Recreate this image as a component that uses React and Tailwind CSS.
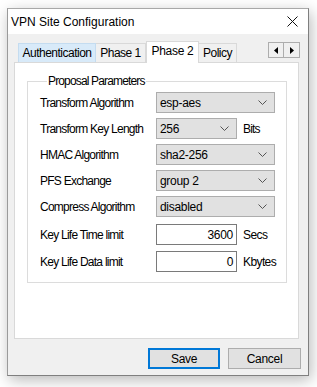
import React from "react";

const Chevron = () => (
  <svg width="9" height="5" viewBox="0 0 9 5">
    <path d="M0.5 0.5 L4.5 4.5 L8.5 0.5" fill="none" stroke="#555" strokeWidth="1" />
  </svg>
);

const Select = ({ value, width }) => (
  <div
    className={`flex items-center justify-between h-[21px] border border-[#adadad] bg-[#e1e1e1] pl-[3px] pr-[7px] ${width}`}
  >
    <span className="tracking-[-0.3px]">{value}</span>
    <Chevron />
  </div>
);

const NumInput = ({ value }) => (
  <div className="flex items-center justify-end h-[21px] w-[81px] border border-[#7a7a7a] bg-white pr-[3px] tracking-[-0.3px]">
    {value}
  </div>
);

const Row = ({ label, children, className = "" }) => (
  <div className={`flex items-center ${className}`}>
    <span className="w-[116px] tracking-[-0.75px]">{label}</span>
    {children}
  </div>
);

export default function App() {
  const tabBase = "flex items-center justify-center h-[19px] border border-b-0 tracking-[-0.5px]";

  return (
    <div className="w-[317px] h-[387px] bg-white pl-[7px] pt-[8px] text-[12px] text-black [font-family:'Liberation_Sans',Arial,sans-serif]">
      <div className="flex flex-col w-[302px] h-[368px] border border-[#7f7f7f] border-t-[#a8a8a8] border-l-[#9a9a9a] bg-[#f0f0f0] shadow-[2px_4px_14px_rgba(0,0,0,0.28)]">
        {/* title bar */}
        <div className="flex items-center justify-between h-[25px] bg-white pl-[3px] pr-[10px]">
          <span>VPN Site Configuration</span>
          <svg width="11" height="11" viewBox="0 0 11 11">
            <path d="M0.5 0.5 L10.5 10.5 M10.5 0.5 L0.5 10.5" stroke="#111" strokeWidth="1" />
          </svg>
        </div>

        {/* tabs */}
        <div className="ml-[6px] mt-[7px] w-[285px] flex items-end h-[21px]">
          <div className="w-[4px]" />
          <div className={`${tabBase} w-[78px] bg-[#d8eaf9] border-[#c4dcf0]`}>Authentication</div>
          <div className={`${tabBase} w-[50px] border-l-0 border-[#d9d9d9]`}>Phase 1</div>
          <div className="relative z-10 -mb-px flex items-center justify-center h-[22px] w-[53px] border border-b-0 border-[#d9d9d9] bg-white pb-[3px] tracking-[-0.3px]">
            Phase 2
          </div>
          <div className={`${tabBase} w-[38px] border-l-0 border-[#d9d9d9]`}>Policy</div>
          <div className="ml-auto -mr-px self-start mt-[1px] flex">
            <div className="flex items-center justify-center w-[16px] h-[16px] border border-[#adadad] bg-[#f0f0f0]">
              <svg width="4" height="7" viewBox="0 0 4 7">
                <path d="M4 0 L0 3.5 L4 7 Z" fill="#000" />
              </svg>
            </div>
            <div className="flex items-center justify-center w-[16px] h-[16px] border border-l-0 border-[#adadad] bg-[#f0f0f0]">
              <svg width="4" height="7" viewBox="0 0 4 7">
                <path d="M0 0 L4 3.5 L0 7 Z" fill="#000" />
              </svg>
            </div>
          </div>
        </div>

        {/* panel */}
        <div className="ml-[6px] w-[285px] h-[277px] border border-[#d9d9d9] bg-white pt-[11px]">
          <fieldset className="ml-[12px] w-[260px] border border-[#dcdcdc] pl-[12px] pt-[4px] pb-[10px]">
            <legend className="ml-[7px] px-[1px] leading-[14px] tracking-[-0.85px]">Proposal Parameters</legend>
            <div className="flex flex-col">
              <Row label="Transform Algorithm">
                <Select value="esp-aes" width="w-[119px]" />
              </Row>
              <Row label="Transform Key Length" className="mt-[5px]">
                <Select value="256" width="w-[81px]" />
                <span className="ml-[6px] tracking-[-0.8px]">Bits</span>
              </Row>
              <Row label="HMAC Algorithm" className="mt-[5px]">
                <Select value="sha2-256" width="w-[119px]" />
              </Row>
              <Row label="PFS Exchange" className="mt-[5px]">
                <Select value="group 2" width="w-[119px]" />
              </Row>
              <Row label="Compress Algorithm" className="mt-[5px]">
                <Select value="disabled" width="w-[119px]" />
              </Row>
              <Row label="Key Life Time limit" className="mt-[7px]">
                <NumInput value="3600" />
                <span className="ml-[6px] tracking-[-0.6px]">Secs</span>
              </Row>
              <Row label="Key Life Data limit" className="mt-[6px]">
                <NumInput value="0" />
                <span className="ml-[6px] tracking-[-0.6px]">Kbytes</span>
              </Row>
            </div>
          </fieldset>
        </div>

        {/* buttons */}
        <div className="flex justify-end gap-[8px] mt-[9px] pr-[7px]">
          <button className="w-[72px] h-[21px] border-2 border-[#0078d7] bg-[#e1e1e1] tracking-[-0.3px]">Save</button>
          <button className="w-[73px] h-[21px] border border-[#adadad] bg-[#e1e1e1] tracking-[-0.3px]">Cancel</button>
        </div>
      </div>
    </div>
  );
}
